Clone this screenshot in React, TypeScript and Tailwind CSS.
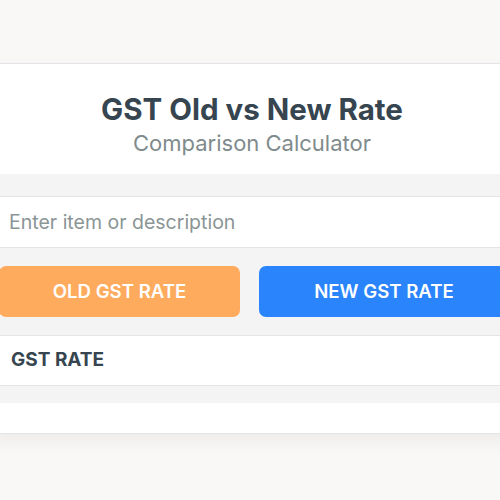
import React from "react";

export default function App() {
  return (
    <div className="h-[500px] w-[500px] overflow-hidden bg-[#f9f8f7] font-['Inter',sans-serif]">
      <div className="mt-[63px] -ml-[8px] w-[520px] border-y border-[#e2e4e7] bg-[#f4f4f4] shadow-[0_8px_16px_rgba(0,0,0,0.05)]">
        {/* header */}
        <div className="flex h-[110px] flex-col items-center bg-white pt-[27px]">
          <h1 className="text-[29.5px] font-bold leading-[36px] text-[#36454f]">GST Old vs New Rate</h1>
          <p className="mt-[2px] text-[22px] leading-[28px] text-[#7f8b8c]">Comparison Calculator</p>
        </div>

        {/* input */}
        <div className="mt-[22px] border-y border-[#e2e4e7] bg-white">
          <input
            className="h-[50px] w-full bg-transparent pl-[17px] text-[19.5px] text-[#36454f] outline-none placeholder:text-[#8a9595]"
            placeholder="Enter item or description"
          />
        </div>

        {/* buttons */}
        <div className="mt-[18px] flex gap-[19px] pl-[7px]">
          <button className="h-[51px] w-[241px] rounded-[7px] bg-[#ffab5e] text-[18.6px] font-semibold text-white">
            OLD GST RATE
          </button>
          <button className="h-[51px] w-[250px] rounded-[7px] bg-[#2a84fb] text-[18.6px] font-semibold text-white">
            NEW GST RATE
          </button>
        </div>

        {/* result rows */}
        <div className="mt-[18px] flex h-[51px] items-center border-y border-[#e2e4e7] bg-white pl-[19px]">
          <span className="text-[19px] font-bold text-[#36454f]">GST RATE</span>
        </div>
        <div className="mt-[17px] h-[30px] bg-white"></div>
      </div>
    </div>
  );
}
